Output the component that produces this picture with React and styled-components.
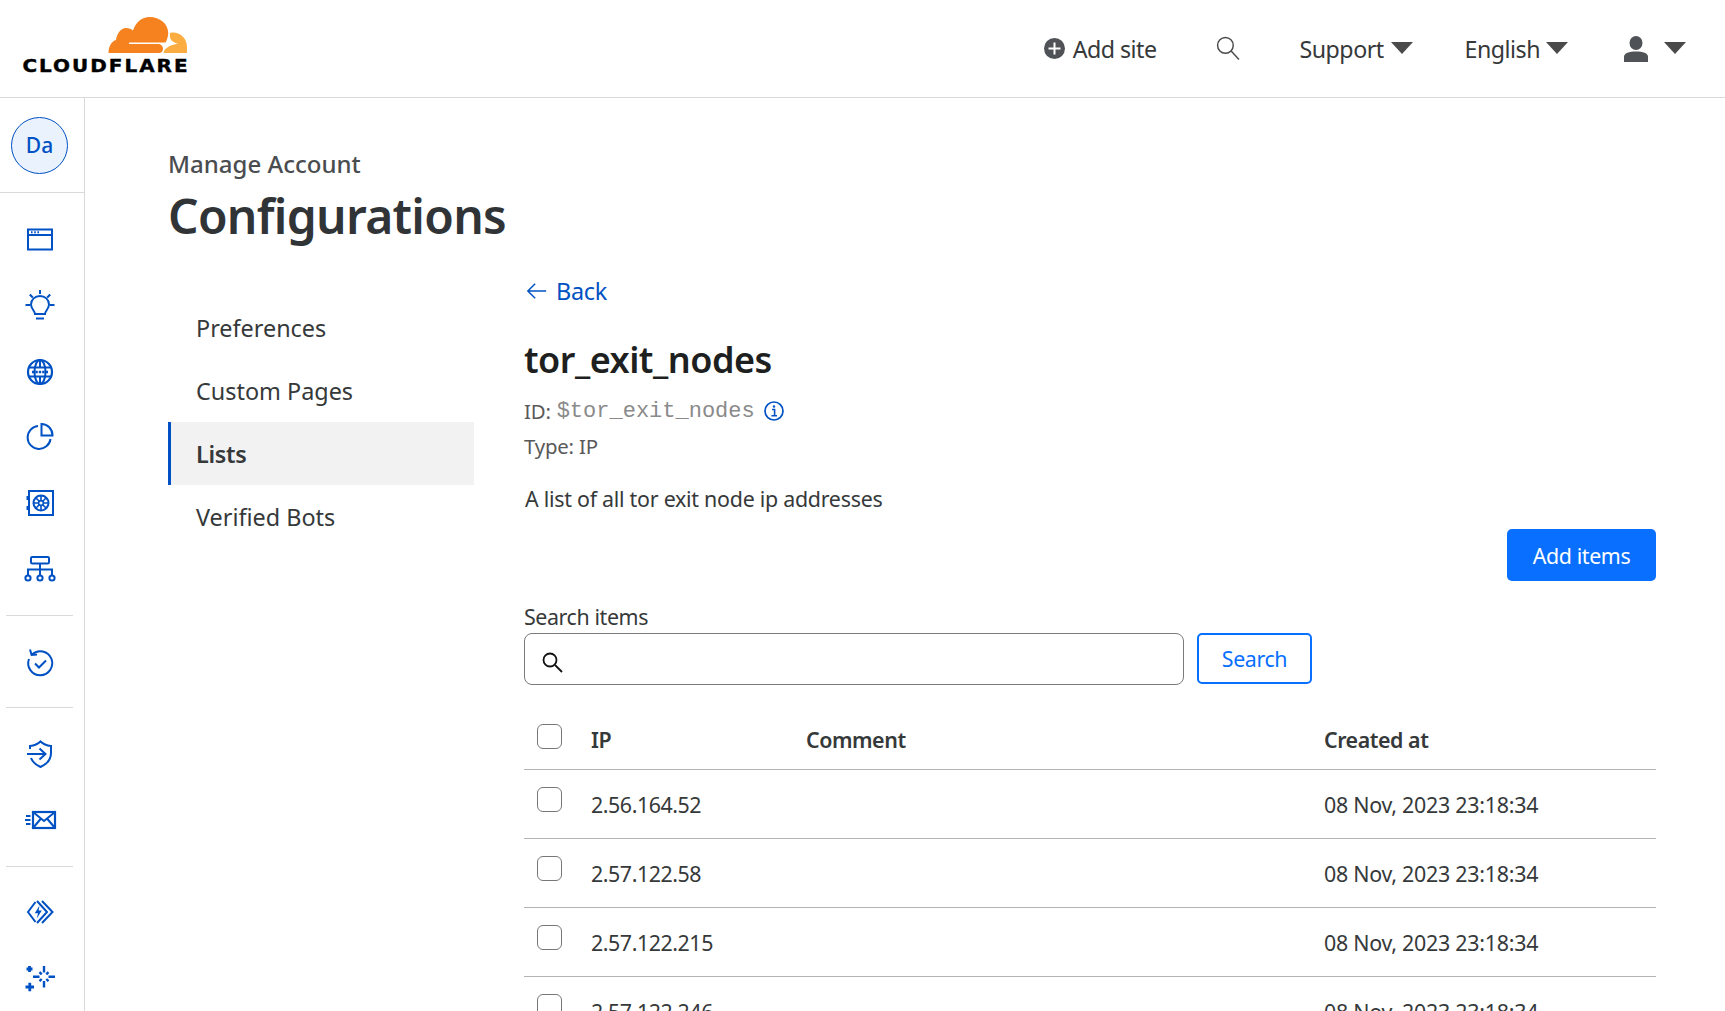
import React from "react";
import styled, { createGlobalStyle } from "styled-components";

const Global = createGlobalStyle`
  html, body { margin: 0; padding: 0; height: 100%; overflow: hidden; background: #fff; }
  body { font-family: "Noto Sans", "Open Sans", sans-serif; color: #36393a; }
  * { box-sizing: border-box; }
`;

const Page = styled.div`
  width: 1725px;
  height: 1011px;
  overflow: hidden;
  display: flex;
  flex-direction: column;
`;
const Header = styled.header`
  flex: 0 0 98px;
  height: 98px;
  border-bottom: 1px solid #d9d9d9;
  display: flex;
  align-items: center;
  justify-content: space-between;
  padding: 0 39px 0 22px;
`;
const LogoBox = styled.div`
  display: flex;
  flex-direction: column;
  align-items: flex-end;
  width: 166px;
  margin-top: -8px;
`;
const Wordmark = styled.div`
  font-family: "DejaVu Sans", sans-serif;
  font-weight: 700;
  font-size: 17.5px;
  line-height: 14px;
  letter-spacing: 1.75px;
  color: #000;
  white-space: nowrap;
  margin: 5px -2px 0 0;
  -webkit-text-stroke: 0.4px #000;
  transform: scaleX(1.14);
  transform-origin: right center;
`;
const TopNav = styled.nav`
  display: flex;
  align-items: center;
`;
const TopItem = styled.div`
  display: flex;
  align-items: center;
  gap: ${(p) => p.$gap ?? 8}px;
  margin-left: ${(p) => p.$ml ?? 0}px;
  font-size: 23.2px;
  letter-spacing: -0.5px;
  color: #36393a;
  white-space: nowrap;
`;
const Caret = styled.span`
  display: inline-block;
  width: 0;
  height: 0;
  border-left: 11px solid transparent;
  border-right: 11px solid transparent;
  border-top: 12px solid #4a4a4a;
  margin-top: -2px;
`;
const Body = styled.div`
  flex: 1;
  display: flex;
  min-height: 0;
`;
const Sidebar = styled.aside`
  flex: 0 0 85px;
  border-right: 1px solid #d9d9d9;
  display: flex;
  flex-direction: column;
`;
const AvatarBox = styled.div`
  height: 95px;
  border-bottom: 1px solid #d9d9d9;
  display: flex;
  align-items: center;
  justify-content: center;
  padding-right: 5px;
`;
const Avatar = styled.div`
  width: 57px;
  height: 57px;
  border-radius: 50%;
  border: 1px solid #0051c3;
  background: #eaf2fd;
  color: #0051c3;
  font-size: 21px;
  font-weight: 500;
  display: flex;
  align-items: center;
  justify-content: center;
`;
const SideGroup = styled.div`
  margin: 0 11px 0 6px;
  padding: ${(p) => p.$pad};
  border-bottom: ${(p) => (p.$last ? "none" : "1px solid #d9d9d9")};
  display: flex;
  flex-direction: column;
  align-items: center;
  gap: ${(p) => p.$gap ?? 32}px;
`;
const SideIcon = styled.svg`
  width: 34px;
  height: 34px;
  display: block;
  fill: none;
  stroke: #0051c3;
  stroke-width: 2;
  color: #0051c3;
`;
const Main = styled.main`
  flex: 1;
  min-width: 0;
  padding: 50px 69px 0 83px;
`;
const Kicker = styled.div`
  font-size: 24px;
  line-height: 32px;
  font-weight: 500;
  color: #4a4d50;
`;
const PageTitle = styled.h1`
  margin: 4px 0 0;
  font-size: 48px;
  line-height: 64px;
  font-weight: 600;
  letter-spacing: -0.7px;
  color: #313437;
`;
const Columns = styled.div`
  display: flex;
  gap: 50px;
  margin-top: 27px;
`;
const SideNav = styled.nav`
  flex: 0 0 306px;
  margin-top: 21px;
`;
const NavItem = styled.div`
  height: 63px;
  display: flex;
  align-items: center;
  padding-left: ${(p) => (p.$active ? "25px" : "28px")};
  font-size: 23.4px;
  font-weight: ${(p) => (p.$active ? 600 : 400)};
  letter-spacing: ${(p) => (p.$active ? "-0.3px" : "0")};
  color: #36393a;
  background: ${(p) => (p.$active ? "#f2f2f2" : "transparent")};
  border-left: ${(p) => (p.$active ? "3px solid #0051c3" : "none")};
`;
const Content = styled.section`
  flex: 1;
  min-width: 0;
`;
const BackLink = styled.a`
  display: flex;
  align-items: center;
  gap: 8px;
  height: 32px;
  padding-left: 2px;
  font-size: 23.4px;
  letter-spacing: -0.3px;
  color: #0051c3;
`;
const ListTitle = styled.h2`
  margin: 29px 0 0;
  font-size: 36px;
  line-height: 48px;
  font-weight: 600;
  letter-spacing: -0.5px;
  color: #1d1f20;
`;
const MetaLine = styled.div`
  display: flex;
  align-items: center;
  margin-top: ${(p) => p.$mt}px;
  height: 32px;
  font-size: 20.4px;
  letter-spacing: -0.2px;
  color: #595959;
`;
const Mono = styled.span`
  font-family: "Liberation Mono", monospace;
  font-size: 22px;
  letter-spacing: 0;
  color: #8a8a8a;
  margin: 1px 0 0 6px;
`;
const InfoIcon = styled.svg`
  margin-left: 9px;
`;
const Description = styled.p`
  margin: 21px 0 0;
  height: 32px;
  line-height: 32px;
  padding-left: 1px;
  font-size: 21.4px;
  letter-spacing: -0.26px;
  color: #36393a;
`;
const ActionRow = styled.div`
  display: flex;
  justify-content: flex-end;
  margin-top: 14px;
`;
const PrimaryButton = styled.button`
  width: 149px;
  height: 52px;
  border: none;
  border-radius: 5px;
  background: #086fff;
  color: #fff;
  font-family: inherit;
  font-size: 21.4px;
  letter-spacing: -0.4px;
`;
const FieldLabel = styled.label`
  display: block;
  margin-top: 22px;
  height: 28px;
  line-height: 28px;
  font-size: 21.4px;
  letter-spacing: -0.4px;
  color: #36393a;
`;
const SearchRow = styled.div`
  display: flex;
  gap: 13px;
  margin-top: 2px;
`;
const SearchField = styled.div`
  position: relative;
  width: 660px;
  height: 52px;
  border: 1px solid #7a7a7a;
  border-radius: 8px;
  display: flex;
  align-items: center;
  padding: 6px 0 0 15px;
`;
const SearchInput = styled.input`
  flex: 1;
  border: none;
  outline: none;
  background: transparent;
`;
const OutlineButton = styled.button`
  width: 115px;
  height: 51px;
  border: 2px solid #086fff;
  border-radius: 5px;
  background: #fff;
  color: #086fff;
  font-family: inherit;
  font-size: 21.4px;
  letter-spacing: -0.4px;
`;
const Table = styled.table`
  width: 100%;
  table-layout: fixed;
  border-collapse: collapse;
  margin-top: 26px;
`;
const Th = styled.th`
  height: 58px;
  padding: 0;
  text-align: left;
  font-size: 21.4px;
  font-weight: 600;
  letter-spacing: -0.45px;
  color: #36393a;
  border-bottom: 1px solid #b3b3b3;
`;
const Td = styled.td`
  height: 69px;
  padding: 1px 0 0;
  font-size: 21.4px;
  letter-spacing: ${(p) => p.$ls ?? -0.45}px;
  color: #36393a;
  border-bottom: 1px solid #b3b3b3;
`;
const CheckCell = styled.div`
  padding-left: 13px;
  display: flex;
  margin-top: ${(p) => p.$mt}px;
`;
const Check = styled.input.attrs({ type: "checkbox" })`
  appearance: none;
  width: 25px;
  height: 25px;
  margin: 0;
  background: #fff;
  border: 1px solid #777;
  border-radius: 6px;
`;

const Cloud = () => (
  <svg width="80" height="37" viewBox="108 17 80 37" aria-hidden="true">
    <path fill="#f6821f" d="M108.5 53 C108.5 46 112 41 116 40 C117 33 121 28 126 28 C129 28 131.5 29 133 30.5 C136 22 142 17 149.5 17 C160 17 168 24 168.2 32.5 C168.3 36 167 40 165.5 42.5 L129 42.5 L129 44 L159 44 C162 44.5 163 47 163 49 C163 51 161.5 53 159 53 Z" />
    <path fill="#fbad41" d="M170 33 C178 31 187 37 187 47 L187 53 L163.5 53 C164.5 48 170 45 178 43.5 C172 42.5 169 39 170 33 Z" />
  </svg>
);

const Plain = (p) => <svg viewBox="0 0 24 24" fill="none" stroke="currentColor" aria-hidden="true" {...p} />;

const icons = {
  browser: (
    <>
      <rect x="5" y="6.5" width="24" height="20" />
      <path d="M5 12h24" />
      <path d="M8 9.3h1.6M11.2 9.3h1.6M14.4 9.3h1.6" />
    </>
  ),
  bulb: (
    <>
      <path d="M12 25 C12 22 8 20 8 15.5 C8 10.5 12 7 17 7 C22 7 26 10.5 26 15.5 C26 20 22 22 22 25 Z" />
      <path d="M13 29.5h8" />
      <path d="M17 1v4M6.8 5.5l3 3M27.2 5.5l-3 3M2.5 16h4.5M27 16h4.5" />
    </>
  ),
  globe: (
    <>
      <circle cx="17" cy="17" r="12" strokeWidth="2.2" />
      <ellipse cx="17" cy="17" rx="5.5" ry="12" />
      <path d="M17 5v7M17 22v7" />
      <path d="M5.5 12.5h23M5.5 21.5h23" />
      <path d="M9 17h16" strokeDasharray="2.4 1" strokeWidth="2.4" />
    </>
  ),
  pie: (
    <>
      <path d="M15 6 A11.5 11.5 0 1 0 27.5 19" />
      <path d="M18.5 4 C24.5 4 29.5 9 29.5 15.5 L18.5 15.5 Z" />
    </>
  ),
  safe: (
    <>
      <rect x="6" y="5" width="24" height="24" />
      <path d="M4.5 10v4M4.5 20v4" />
      <circle cx="18" cy="17" r="7.5" strokeWidth="2" />
      <circle cx="18" cy="17" r="2.4" strokeWidth="1.6" />
      <path d="M18 10v4.5M18 19.5V24M11 17h4.5M20.5 17H25M13 12l3 3M20 19l3 3M23 12l-3 3M16 19l-3 3" strokeWidth="1.6" />
    </>
  ),
  network: (
    <>
      <rect x="8" y="5" width="18" height="6.5" rx="1.2" />
      <path d="M17 11.500v12M5 23.500v-6h24v6" />
      <circle cx="5" cy="26" r="2.600" />
      <circle cx="17" cy="26" r="2.600" />
      <circle cx="29" cy="26" r="2.600" />
    </>
  ),
  history: (
    <>
      <path d="M9 8.500 A12 12 0 1 1 6 13" />
      <path d="M7 3.500 L8.600 9 L14 8.500" />
      <path d="M12 17.500l4 4 7-7" />
    </>
  ),
  shield: (
    <>
      <path d="M7 12V9 C12 8.500 15 7 17.500 4.500 C20 7 23 8.500 28 9 V16 C28 23 23 27.500 17.500 30 C13 28 9.500 25 8 21" />
      <path d="M4 17h18M16.500 11.500 L22.500 17 L16.500 22.500" />
    </>
  ),
  mail: (
    <>
      <rect x="10" y="9" width="22" height="16" strokeWidth="2.200" />
      <path d="M10 9 L21 18 L32 9M10 25 L18 15.500M32 25 L24 15.500" />
      <path d="M3 13h4.500M2 17h5.500M3 21h4.500" />
    </>
  ),
  workers: (
    <>
      <path d="M12.500 7 L5 17 L12.500 27" />
      <path d="M14 6 L24 17 L14 28M19 6 L29.500 17 L19 28" />
      <path d="M16.500 10.500 L11.800 18.200 H15 L13.800 23.500 L18.800 15.500 H15.600 Z" fill="currentColor" stroke="none" />
    </>
  ),
  sparkle: (
    <>
      <g strokeWidth="2.400">
        <path d="M21 5v6.500M21 20v6.500M32 15.700h-6.500M16.500 15.700H10" />
        <path d="M16.500 11.200l2.200 2.200M25.500 11.200l-2.200 2.200M16.500 20.200l2.200-2.200M25.500 20.200l-2.200-2.200" />
      </g>
      <path d="M3.500 8h6M6.500 5v6" strokeWidth="2.800" />
      <path d="M2.500 26h8.500M6.800 21.800v8.500" strokeWidth="2.800" />
    </>
  ),
};

const NavIcon = ({ name }) => (
  <SideIcon viewBox="0 0 34 34" aria-hidden="true">{icons[name]}</SideIcon>
);

const rows = ["2.56.164.52", "2.57.122.58", "2.57.122.215", "2.57.122.246"];

export default function App() {
  return (
    <Page>
      <Global />
      <Header>
        <LogoBox>
          <Cloud />
          <Wordmark>CLOUDFLARE</Wordmark>
        </LogoBox>
        <TopNav>
          <TopItem $gap={8}>
            <svg width="21" height="21" viewBox="0 0 21 21" aria-hidden="true">
              <circle cx="10.500" cy="10.500" r="10.500" fill="#4f5256" />
              <path d="M10.500 4.500v12M4.500 10.500h12" stroke="#fff" strokeWidth="2" />
            </svg>
            Add site
          </TopItem>
          <TopItem $ml={58}>
            <Plain width="25" height="25" strokeWidth="1.400" color="#4a4a4a">
              <circle cx="10" cy="9" r="7.500" />
              <path d="M15.500 14.500L23 22.500" />
            </Plain>
          </TopItem>
          <TopItem $ml={60} $gap={7}>Support <Caret /></TopItem>
          <TopItem $ml={52} $gap={6}>English <Caret /></TopItem>
          <TopItem $ml={56} $gap={16}>
            <svg width="24" height="26" viewBox="0 0 24 26" aria-hidden="true">
              <ellipse cx="12" cy="7" rx="6.500" ry="7" fill="#4f5256" />
              <path d="M0 26 V21 C0 17 5 15.500 12 15.500 C19 15.500 24 17 24 21 V26 Z" fill="#4f5256" />
            </svg>
            <Caret />
          </TopItem>
        </TopNav>
      </Header>
      <Body>
        <Sidebar>
          <AvatarBox><Avatar>Da</Avatar></AvatarBox>
          <SideGroup $pad="30px 0 29px" $gap={31.8}>
            {["browser", "bulb", "globe", "pie", "safe", "network"].map((n) => <NavIcon key={n} name={n} />)}
          </SideGroup>
          <SideGroup $pad="30px 0 27px"><NavIcon name="history" /></SideGroup>
          <SideGroup $pad="29px 0 29px">
            <NavIcon name="shield" />
            <NavIcon name="mail" />
          </SideGroup>
          <SideGroup $pad="28px 0 0" $last>
            <NavIcon name="workers" />
            <NavIcon name="sparkle" />
          </SideGroup>
        </Sidebar>
        <Main>
          <Kicker>Manage Account</Kicker>
          <PageTitle>Configurations</PageTitle>
          <Columns>
            <SideNav>
              <NavItem>Preferences</NavItem>
              <NavItem>Custom Pages</NavItem>
              <NavItem $active>Lists</NavItem>
              <NavItem>Verified Bots</NavItem>
            </SideNav>
            <Content>
              <BackLink>
                <Plain width="22" height="22" strokeWidth="1.600" color="#0051c3">
                  <path d="M22 12H2M10 4l-8 8 8 8" />
                </Plain>
                Back
              </BackLink>
              <ListTitle>tor_exit_nodes</ListTitle>
              <MetaLine $mt={11}>
                ID:<Mono>$tor_exit_nodes</Mono>
                <InfoIcon width="20" height="20" viewBox="0 0 20 20" aria-hidden="true">
                  <circle cx="10" cy="10" r="9" fill="none" stroke="#0051c3" strokeWidth="1.700" />
                  <path d="M8 8.500h2.600v6M7.500 14.700h5.500" fill="none" stroke="#0051c3" strokeWidth="1.600" />
                  <circle cx="10" cy="5.500" r="1.200" fill="#0051c3" />
                </InfoIcon>
              </MetaLine>
              <MetaLine $mt={3}>Type: IP</MetaLine>
              <Description>A list of all tor exit node ip addresses</Description>
              <ActionRow><PrimaryButton>Add items</PrimaryButton></ActionRow>
              <FieldLabel>Search items</FieldLabel>
              <SearchRow>
                <SearchField>
                  <Plain width="24" height="24" strokeWidth="1.800" color="#111">
                    <circle cx="10" cy="10" r="6.500" />
                    <path d="M15 15L22 22" />
                  </Plain>
                  <SearchInput aria-label="Search items" />
                </SearchField>
                <OutlineButton>Search</OutlineButton>
              </SearchRow>
              <Table>
                <colgroup>
                  <col width="67" />
                  <col width="215" />
                  <col width="518" />
                  <col />
                </colgroup>
                <thead>
                  <tr>
                    <Th><CheckCell $mt={-7}><Check /></CheckCell></Th>
                    <Th>IP</Th>
                    <Th>Comment</Th>
                    <Th>Created at</Th>
                  </tr>
                </thead>
                <tbody>
                  {rows.map((ip) => (
                    <tr key={ip}>
                      <Td><CheckCell $mt={-10}><Check /></CheckCell></Td>
                      <Td>{ip}</Td>
                      <Td />
                      <Td $ls={-0.25}>08 Nov, 2023 23:18:34</Td>
                    </tr>
                  ))}
                </tbody>
              </Table>
            </Content>
          </Columns>
        </Main>
      </Body>
    </Page>
  );
}
